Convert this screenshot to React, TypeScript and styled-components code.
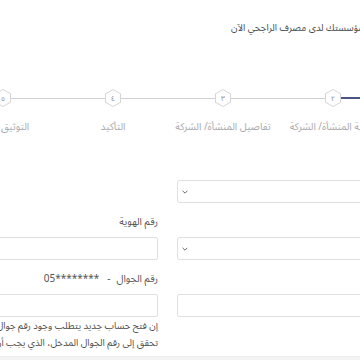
import React from "react";
import styled, { createGlobalStyle } from "styled-components";

const GlobalStyle = createGlobalStyle`
  html, body {
    margin: 0;
    padding: 0;
    background: #ffffff;
    overflow: hidden;
  }
  body {
    font-family: "Noto Sans Arabic", "DejaVu Sans", sans-serif;
    color: #555;
  }
`;

const Viewport = styled.div`
  width: 360px;
  height: 360px;
  overflow: hidden;
  direction: ltr;
  display: flex;
  flex-direction: column;
`;

const Page = styled.div`
  direction: rtl;
  width: 660px;
  margin-left: -152px;
  flex: 1;
`;

const Header = styled.h1`
  margin: 0;
  padding: 21px 0 0 383px;
  font-size: 9.5px;
  line-height: 14px;
  font-weight: 400;
  color: #4a4a4a;
  text-align: left;
  white-space: nowrap;
`;

const Stepper = styled.ol`
  list-style: none;
  margin: 54px 0 0;
  padding: 0 10px 0 100px;
  display: grid;
  grid-template-columns: repeat(5, 110px);
`;

const Step = styled.li`
  display: flex;
  flex-direction: column;
  align-items: center;
`;

type Tone = "done" | "todo" | "none";

const toneColor = (t: Tone) =>
  t === "done" ? "#4b5683" : t === "todo" ? "#cfcfd4" : "transparent";

const Track = styled.div<{ $right: Tone; $left: Tone }>`
  position: relative;
  width: 100%;
  height: 18px;
  display: flex;
  justify-content: center;
  &::before,
  &::after {
    content: "";
    position: absolute;
    top: 50%;
    width: 50%;
  }
  &::before {
    right: 0;
    height: ${(p) => (p.$right === "done" ? 2 : 1)}px;
    margin-top: ${(p) => (p.$right === "done" ? -1 : 0)}px;
    background: ${(p) => toneColor(p.$right)};
  }
  &::after {
    left: 0;
    height: ${(p) => (p.$left === "done" ? 2 : 1)}px;
    margin-top: ${(p) => (p.$left === "done" ? -1 : 0)}px;
    background: ${(p) => toneColor(p.$left)};
  }
`;

const hexShape = "polygon(50% 0, 100% 25%, 100% 75%, 50% 100%, 0 75%, 0 25%)";

const HexOuter = styled.div<{ $active?: boolean }>`
  position: relative;
  z-index: 1;
  width: 16px;
  height: 18px;
  clip-path: ${hexShape};
  background: ${(p) => (p.$active ? "#4b5683" : "#d6d6da")};
  display: flex;
  align-items: center;
  justify-content: center;
`;

const HexInner = styled.span`
  width: 14px;
  height: 16px;
  clip-path: ${hexShape};
  background: #fff;
  display: flex;
  align-items: center;
  justify-content: center;
  font-size: 7px;
  line-height: 1;
  color: #8a8a90;
`;

const StepLabel = styled.span<{ $shift?: number }>`
  margin-top: 13px;
  margin-left: ${(p) => p.$shift ?? 0}px;
  font-size: 10px;
  line-height: 14px;
  color: #a9a9ae;
  white-space: nowrap;
`;

const Form = styled.form`
  margin-top: 24px;
  padding: 0 21px 0 0;
  display: grid;
  grid-template-columns: 1fr 1fr;
  column-gap: 19px;
  row-gap: 12px;
`;

const Field = styled.div`
  display: flex;
  flex-direction: column;
  min-width: 0;
`;

const Label = styled.label`
  font-size: 10px;
  line-height: 14px;
  color: #555;
  margin-bottom: 8px;
  white-space: nowrap;
  display: flex;
  align-items: center;
`;

const Masked = styled.bdi`
  direction: ltr;
  unicode-bidi: isolate;
`;

const Dash = styled.span`
  margin: 0 6px 0 8px;
`;

const Box = styled.div`
  height: 23px;
  box-sizing: border-box;
  border: 1px solid #e0e0e3;
  border-radius: 2px;
  background: #fff;
  display: flex;
  align-items: center;
  justify-content: flex-end;
  padding: 0 4px;
`;

const Hint = styled.p<{ $first?: boolean }>`
  margin: ${(p) => (p.$first ? 1 : 0)}px 0 0;
  font-size: 9.5px;
  line-height: 17px;
  color: #4f4f4f;
  white-space: nowrap;
`;

const Footer = styled.div`
  height: 3px;
  border-top: 1px solid #ececec;
  background: #f3f3f3;
`;

const Chevron = () => (
  <svg width="6" height="4" viewBox="0 0 6 4" aria-hidden="true">
    <path d="M0.6 0.8 L3 3.2 L5.4 0.8" fill="none" stroke="#6b6b70" strokeWidth="1" />
  </svg>
);

const steps: { n: string; label: string; right: Tone; left: Tone; active?: boolean; shift?: number }[] = [
  { n: "١", label: "معلومات المنشأة/ الشركة", right: "none", left: "done", active: true },
  { n: "٢", label: "ملكية المنشأة/ الشركة", right: "done", left: "todo" },
  { n: "٣", label: "تفاصيل المنشأة/ الشركة", right: "todo", left: "todo" },
  { n: "٤", label: "التأكيد", right: "todo", left: "todo" },
  { n: "٥", label: "التوثيق", right: "todo", left: "none", shift: 24 },
];

export default function App() {
  return (
    <Viewport>
      <GlobalStyle />
      <Page>
        <Header>افتح حساب مؤسستك لدى مصرف الراجحي الآن</Header>
        <Stepper>
          {steps.map((s) => (
            <Step key={s.n}>
              <Track $right={s.right} $left={s.left}>
                <HexOuter $active={s.active}>
                  <HexInner>{s.n}</HexInner>
                </HexOuter>
              </Track>
              <StepLabel $shift={s.shift}>{s.label}</StepLabel>
            </Step>
          ))}
        </Stepper>
        <Form>
          <Field>
            <Label>نوع المنشأة</Label>
            <Box>
              <Chevron />
            </Box>
          </Field>
          <Field />
          <Field>
            <Label>نوع الهوية</Label>
            <Box>
              <Chevron />
            </Box>
          </Field>
          <Field>
            <Label>رقم الهوية</Label>
            <Box />
          </Field>
          <Field>
            <Label>البريد الإلكتروني</Label>
            <Box />
          </Field>
          <Field>
            <Label>
              رقم الجوال
              <Dash>-</Dash>
              <Masked>05********</Masked>
            </Label>
            <Box />
            <Hint $first>إن فتح حساب جديد يتطلب وجود رقم جوال مسجل باسمك لدى أبشر، سيتم إرسال رمز</Hint>
            <Hint>تحقق إلى رقم الجوال المدخل، الذي يجب أن يكون مسجلاً باسمك</Hint>
          </Field>
        </Form>
      </Page>
      <Footer />
    </Viewport>
  );
}
